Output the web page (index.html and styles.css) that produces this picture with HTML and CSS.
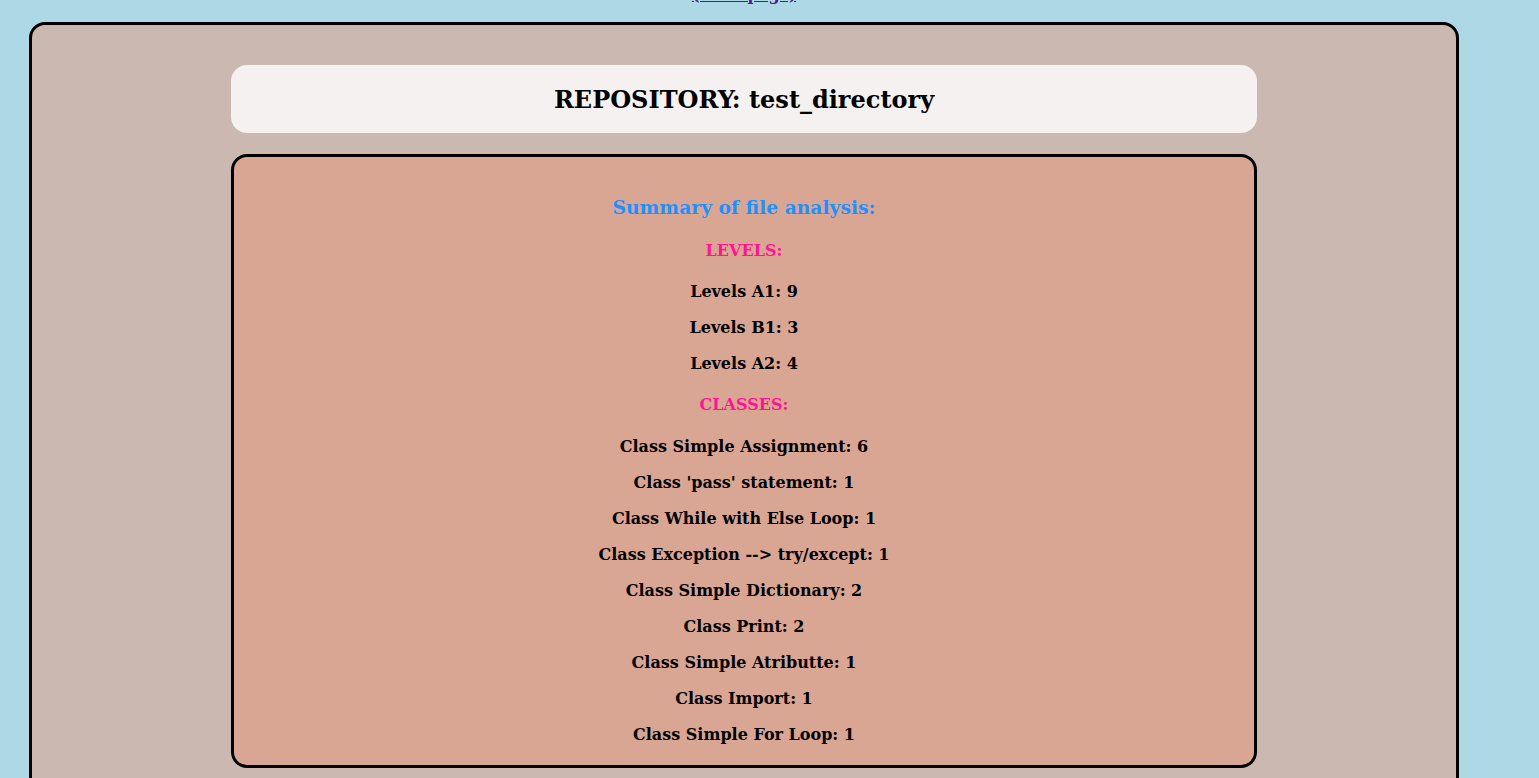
FILE: index.html
```html
<!DOCTYPE html>
<html>
<head>
<meta charset="utf-8">
<link rel="stylesheet" href="styles.css">
</head>
<body>
<div class="toplink"><a href="#">(main page)</a></div>
<div class="frame">
  <div class="title-box">
    <h2 class="title">REPOSITORY: test_directory</h2>
  </div>
  <div class="summary-box">
    <h3 class="summary">Summary of file analysis:</h3>
    <h4 class="section">LEVELS:</h4>
    <p class="item">Levels A1: 9</p>
    <p class="item">Levels B1: 3</p>
    <p class="item">Levels A2: 4</p>
    <h4 class="section">CLASSES:</h4>
    <p class="item">Class Simple Assignment: 6</p>
    <p class="item">Class 'pass' statement: 1</p>
    <p class="item">Class While with Else Loop: 1</p>
    <p class="item">Class Exception --&gt; try/except: 1</p>
    <p class="item">Class Simple Dictionary: 2</p>
    <p class="item">Class Print: 2</p>
    <p class="item">Class Simple Atributte: 1</p>
    <p class="item">Class Import: 1</p>
    <p class="item">Class Simple For Loop: 1</p>
  </div>
</div>
</body>
</html>
```
FILE: styles.css
```css
html, body {
  margin: 0;
  padding: 0;
}
body {
  background: #add8e6;
  font-family: "DejaVu Serif", serif;
  height: 778px;
  overflow: hidden;
}
.toplink {
  width: 1430px;
  margin-left: 29px;
  text-align: center;
  font-size: 16px;
  font-weight: bold;
  letter-spacing: -0.4px;
  line-height: 19px;
  height: 19px;
  margin-top: -15px;
  margin-bottom: 18px;
}
.toplink a {
  color: #551a8b;
}
.frame {
  box-sizing: border-box;
  width: 1430px;
  margin-left: 29px;
  border: 3px solid #000;
  border-radius: 16px;
  background: #cbb8b0;
  padding: 40px 199px 40px;
  height: 900px;
}
.title-box {
  background: #f5f1f0;
  border-radius: 16px;
  height: 68px;
  display: flex;
  align-items: center;
  justify-content: center;
}
.title {
  margin: 0;
  font-size: 24px;
  font-weight: bold;
}
.summary-box {
  margin-top: 21px;
  border: 3px solid #000;
  border-radius: 16px;
  background: #daa694;
  text-align: center;
  padding: 30px 0 21px;
}
.summary {
  color: #1e90ff;
  font-size: 18.72px;
  margin: 9px 0 0;
  line-height: 22px;
}
.section {
  color: #ff1493;
  font-size: 16px;
  line-height: 19px;
  margin: 23px 0 0;
}
.item {
  font-size: 16px;
  font-weight: bold;
  line-height: 19px;
  margin: 17px 0 0;
}
.item + .section {
  margin-top: 22px;
}
.section + .item {
  margin-top: 22px;
}
.item + .section + .item {
  margin-top: 23px;
}
```
